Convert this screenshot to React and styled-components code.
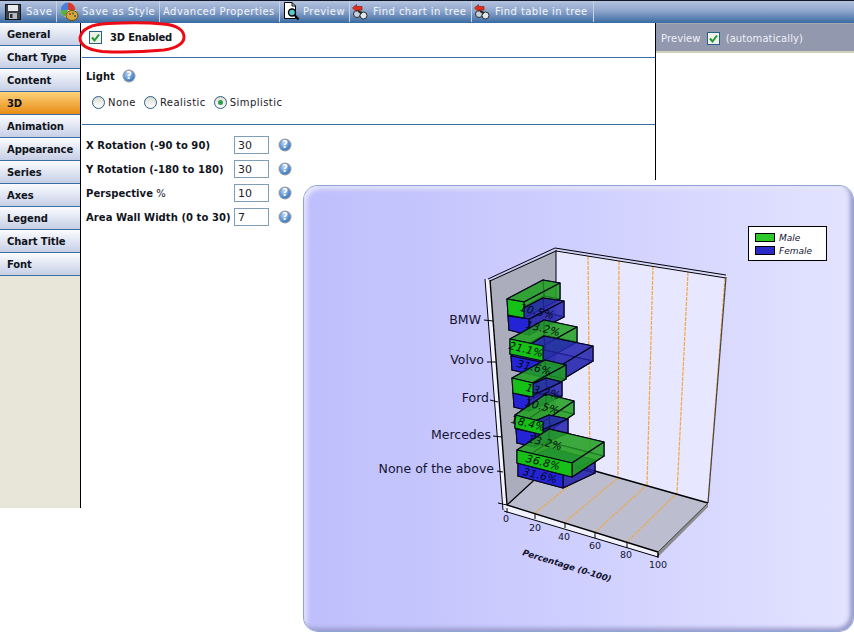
import React from 'react'
import styled, { createGlobalStyle } from 'styled-components'

const GlobalStyle = createGlobalStyle`
  html, body {
    margin: 0;
    padding: 0;
    background: #fff;
    font-family: "DejaVu Sans", Verdana, sans-serif;
    font-size: 10px;
  }
`

const Page = styled.div`
  position: relative;
  width: 854px;
  height: 636px;
  overflow: hidden;
`

const Toolbar = styled.div`
  display: flex;
  height: 22px;
  border-top: 1px solid #101828;
  background: linear-gradient(#b4c2de, #8ea6cc 45%, #3a6aa2);
`

const ToolButton = styled.div`
  display: flex;
  align-items: center;
  gap: ${p => p.$gap || 3}px;
  width: ${p => p.$width}px;
  box-sizing: border-box;
  padding-left: ${p => p.$left || 4}px;
  border-right: 1px solid #c6d2e6;
  margin-bottom: 1px;
  color: #f2f5fa;
  letter-spacing: 0.45px;
  white-space: nowrap;
`

const Body = styled.div`
  display: flex;
  height: 485px;
`

const Sidebar = styled.div`
  display: flex;
  flex-direction: column;
  flex: 0 0 80px;
  background: #e8e6d8;
  border-right: 1px solid #000;
`

const SideItem = styled.div`
  display: flex;
  align-items: center;
  height: 22px;
  padding-left: 7px;
  border-bottom: 1px solid #3a6ea5;
  font-weight: 700;
  color: #10141c;
  letter-spacing: -0.1px;
  background: ${p => p.$active
    ? 'linear-gradient(#fcd27a, #e88c14)'
    : 'linear-gradient(#fbfcfe, #c6cfe6)'};
`

const Main = styled.div`
  flex: 0 0 574px;
  display: flex;
  flex-direction: column;
`

const Section = styled.div`
  position: relative;
  display: flex;
  flex-direction: column;
  margin-left: 1px;
  border-bottom: 1px solid #3a6ea5;
`

const EnableRow = styled.label`
  display: flex;
  align-items: center;
  gap: 8px;
  height: 28px;
  padding: 0 0 6px 7px;
  font-weight: 700;
  color: #10141c;
  letter-spacing: -0.2px;
`

const Highlight = styled.svg`
  position: absolute;
  left: -4px;
  top: -3px;
`

const LightBlock = styled.div`
  display: flex;
  flex-direction: column;
  height: 66px;
  padding: 10px 0 0 4px;
  box-sizing: border-box;
`

const LightHead = styled.div`
  display: flex;
  align-items: center;
  gap: 7px;
  height: 16px;
  font-weight: 700;
  color: #10141c;
`

const Radios = styled.div`
  display: flex;
  align-items: center;
  gap: 8px;
  margin: 12px 0 0 6px;
`

const RadioItem = styled.span`
  display: flex;
  align-items: center;
  gap: 3px;
  color: #1c2028;
  letter-spacing: 0.45px;
`

const RadioDot = styled.span`
  display: flex;
  align-items: center;
  justify-content: center;
  width: 13px;
  height: 13px;
  box-sizing: border-box;
  border-radius: 50%;
  border: 1px solid #2d5f86;
  background: linear-gradient(#dcdcd4, #fff);

  &::after {
    content: "";
    display: ${p => p.$on ? 'block' : 'none'};
    width: 5px;
    height: 5px;
    border-radius: 50%;
    background: #2f9e4a;
  }
`

const Form = styled.div`
  display: grid;
  grid-template-columns: 148px 35px 23px;
  grid-auto-rows: 18px;
  row-gap: 6px;
  padding: 11px 0 0 5px;
  align-items: center;
`

const FieldLabel = styled.div`
  font-weight: 700;
  color: #10141c;
  white-space: nowrap;
  letter-spacing: 0.06px;

  span {
    font-weight: 400;
  }
`

const FieldInput = styled.div`
  box-sizing: border-box;
  height: 18px;
  padding-left: 3px;
  line-height: 17px;
  font-size: 11px;
  color: #1c2028;
  background: #fff;
  border: 1px solid #7f9db9;
`

const HelpSlot = styled.div`
  display: flex;
  margin-left: 9px;
`

const PreviewColumn = styled.div`
  flex: 1;
  align-self: flex-start;
  height: 157px;
  border-left: 1px solid #000;
`

const PreviewBar = styled.div`
  display: flex;
  align-items: center;
  gap: 6px;
  height: 30px;
  box-sizing: border-box;
  padding: 1px 0 0 5px;
  background: #9298ae;
  border-top: 1px solid #a5a8b4;
  border-bottom: 2px solid #d2d0bc;
  color: #eef0f8;
  letter-spacing: 0.1px;
`

const ChartWindow = styled.div`
  position: absolute;
  left: 304px;
  top: 186px;
  width: 549px;
  height: 445px;
  border-radius: 14px;
  background: linear-gradient(90deg, #bebefc, #cfcfff 50%, #e3e3ff);
  box-shadow: 0 0 0 1px #8ea4d4, inset -3px -3px 4px #9a9ccc, inset 3px 3px 4px #e6e6fc;
`

const ChartSvg = styled.svg`
  display: block;
  width: 100%;
  height: 100%;
`

const Help = () => (
  <svg width="14" height="14" viewBox="0 0 14 14">
    <defs>
      <radialGradient id="hb" cx="40%" cy="35%" r="70%">
        <stop offset="0" stopColor="#b6d4f6" />
        <stop offset="1" stopColor="#2f72c4" />
      </radialGradient>
    </defs>
    <circle cx="7" cy="7" r="6.5" fill="#9a9ea6" />
    <circle cx="7" cy="7" r="5.3" fill="url(#hb)" />
    <text x="7" y="10.4" textAnchor="middle" fontSize="10" fontWeight="700" fill="#fff" fontFamily="DejaVu Sans">?</text>
  </svg>
)

const Check = ({ size = 13 }) => (
  <svg width={size} height={size} viewBox="0 0 13 13">
    <rect x="0.5" y="0.5" width="12" height="12" fill="#eef0ea" stroke="#2d5f86" />
    <path d="M3 6.5 L5.5 9.5 L10 3.5" fill="none" stroke="#1f9a2e" strokeWidth="2" />
  </svg>
)

const Floppy = () => (
  <svg width="16" height="16" viewBox="0 0 16 16">
    <rect x="0.5" y="0.5" width="15" height="15" fill="#3a4048" stroke="#11151a" />
    <rect x="3" y="1" width="10" height="6" fill="#e8eaee" />
    <rect x="4" y="9" width="8" height="6" fill="#b4bac2" />
    <rect x="5" y="10" width="2.5" height="4" fill="#2a3038" />
  </svg>
)

const Palette = () => (
  <svg width="20" height="20" viewBox="0 0 20 20">
    <circle cx="9" cy="8" r="7.5" fill="#e8e4dc" />
    <path d="M9 .5 A7.5 7.5 0 0 1 16.5 8 L9 8 Z" fill="#d83a2c" />
    <path d="M1.5 8 A7.5 7.5 0 0 1 9 .5 L9 8 Z" fill="#4a7ed8" />
    <path d="M1.5 8 A7.5 7.5 0 0 0 6 14.8 L9 8 Z" fill="#58b04a" />
    <ellipse cx="13" cy="13.5" rx="6" ry="5" fill="#d8a838" stroke="#6a4c10" />
    <circle cx="11" cy="12" r="1" fill="#c83020" />
    <circle cx="14" cy="11.5" r="1" fill="#2a7a38" />
    <circle cx="16" cy="14" r="1" fill="#2850a8" />
  </svg>
)

const PreviewIcon = () => (
  <svg width="17" height="19" viewBox="0 0 17 19">
    <path d="M1.5 .5 H9 L12.5 4 V16.5 H1.5 Z" fill="#fff" stroke="#000" />
    <path d="M9 .5 V4 H12.5" fill="none" stroke="#000" />
    <circle cx="9" cy="10.5" r="3.5" fill="#58c8d0" stroke="#000" strokeWidth="1.4" />
    <path d="M11.5 13 L15.5 17.5" stroke="#000" strokeWidth="2.2" />
  </svg>
)

const FindIcon = () => (
  <svg width="16" height="16" viewBox="0 0 16 16">
    <circle cx="5" cy="10" r="3.5" fill="#c6d2dc" stroke="#2c2c2c" />
    <circle cx="11.5" cy="11.5" r="3.5" fill="#dfe6ec" stroke="#2c2c2c" />
    <path d="M6 7 L10 9" stroke="#2c2c2c" strokeWidth="2" />
    <path d="M0.5 4 L4.5 0.5 V2.5 H10 V6 H4.5 V7.5 Z" fill="#e0301c" stroke="#8a1408" strokeWidth="0.6" />
  </svg>
)

const plus = (p, v) => [p[0] + v[0], p[1] + v[1]]
const pts = list => list.map(p => p.join(',')).join(' ')

const BAR_COLORS = {
  green: { front: '#16c016', side: '#26a426', inner: '#128a12' },
  blue: { front: '#2424d6', side: '#2a2ab4', inner: '#16169a' }
}

const barLine = { stroke: '#06061c', strokeWidth: 1.1, strokeLinejoin: 'round' }

// corners of the front face in page pixels, then the depth vector
const groups = [
  {
    green: { color: 'green', tl: [507, 299], tr: [524, 302], br: [524, 318], bl: [508, 315], depth: [36, -19], label: '10.5%', at: [537, 312] },
    blue: { color: 'blue', tl: [508, 316], tr: [529, 319], br: [529, 335], bl: [509, 330], depth: [35, -18], label: '13.2%', at: [543, 329] }
  },
  {
    green: { color: 'green', tl: [510, 339], tr: [543, 346], br: [543, 361], bl: [510, 354], depth: [34, -19], label: '21.1%', at: [526, 350] },
    blue: { color: 'blue', tl: [511, 356], tr: [560, 366], br: [560, 381], bl: [512, 370], depth: [33, -20], label: '31.6%', at: [534, 368] }
  },
  {
    green: { color: 'green', tl: [512, 378], tr: [533, 383], br: [533, 397], bl: [513, 393], depth: [33, -18], label: '13.2%', at: [543, 392] },
    blue: { color: 'blue', tl: [513, 393], tr: [529, 397], br: [529, 411], bl: [514, 407], depth: [33, -15], label: '10.5%', at: [542, 407] }
  },
  {
    green: { color: 'green', tl: [515, 415], tr: [543, 422], br: [543, 435], bl: [515, 428], depth: [31, -21], label: '18.4%', at: [528, 424] },
    blue: { color: 'blue', tl: [516, 429], tr: [535, 433], br: [535, 447], bl: [517, 443], depth: [33, -14], label: '13.2%', at: [545, 443] }
  },
  {
    blueFirst: true,
    green: { color: 'green', tl: [517, 450], tr: [572, 463], br: [572, 477], bl: [517, 463], depth: [32, -21], label: '36.8%', at: [543, 463] },
    blue: { color: 'blue', tl: [518, 463], tr: [563, 475], br: [563, 488], bl: [518, 476], depth: [32, -15], label: '31.6%', at: [540, 476] }
  }
]

const BarBody = ({ color, tl, tr, br, bl, depth }) => {
  const c = BAR_COLORS[color]
  const back = [tl, tr, br, bl].map(p => plus(p, depth))
  return (
    <g>
      <polygon points={pts([bl, br, back[2], back[3]])} fill={c.inner} fillOpacity="0.6" {...barLine} />
      <polygon points={pts(back)} fill={c.inner} fillOpacity="0.5" {...barLine} />
      <polygon points={pts([tl, bl, back[3], back[0]])} fill={c.inner} fillOpacity="0.5" {...barLine} />
      <polygon points={pts([tl, tr, back[1], back[0]])} fill={c.side} fillOpacity="0.75" {...barLine} />
      <polygon points={pts([tr, br, back[2], back[1]])} fill={c.side} fillOpacity="0.75" {...barLine} />
    </g>
  )
}

const BarFront = ({ color, tl, tr, br, bl }) => (
  <polygon points={pts([tl, tr, br, bl])} fill={BAR_COLORS[color].front} {...barLine} />
)

// the green front stays clear of the blue bar, its sides do not
const BarGroup = ({ green, blue, blueFirst }) => (
  <g>
    {blueFirst && <BarBody {...blue} />}
    {blueFirst && <BarFront {...blue} />}
    <BarBody {...green} />
    {!blueFirst && <BarBody {...blue} />}
    {!blueFirst && <BarFront {...blue} />}
    <BarFront {...green} />
  </g>
)

const BarLabel = ({ label, at }) => (
  <text
    x={at[0]}
    y={at[1] + 3}
    textAnchor="middle"
    fontSize="10.5"
    fontStyle="italic"
    fill="#020a14"
    letterSpacing="0.3"
    transform={`rotate(14 ${at[0]} ${at[1]})`}
  >
    {label}
  </text>
)

const wallGrid = [
  [588, 256, 590, 469],
  [619, 261, 618, 478],
  [653, 266, 647, 485],
  [688, 272, 677, 493],
  [725, 278, 708, 503]
]

const floorGrid = [
  [590, 469, 535, 513],
  [618, 478, 565, 522],
  [647, 485, 595, 532],
  [677, 493, 627, 542]
]

const categories = [
  { name: 'BMW', x: 481, y: 320, tick: [484, 320, 493, 321] },
  { name: 'Volvo', x: 484, y: 360, tick: [487, 362, 496, 362] },
  { name: 'Ford', x: 489, y: 398, tick: [490, 400, 498, 402] },
  { name: 'Mercedes', x: 491, y: 435, tick: [493, 436, 502, 437] },
  { name: 'None of the above', x: 494, y: 469, tick: [497, 471, 503, 472] }
]

const valueTicks = [
  { label: '0', x: 507, y: 508, ty: 522, tx: 506 },
  { label: '20', x: 535, y: 514, ty: 531, tx: 535 },
  { label: '40', x: 565, y: 523, ty: 540, tx: 564 },
  { label: '60', x: 595, y: 533, ty: 549, tx: 595 },
  { label: '80', x: 627, y: 543, ty: 558, tx: 626 },
  { label: '100', x: 658, y: 553, ty: 568, tx: 658 }
]

const Chart = () => (
  <ChartSvg viewBox="304 186 549 445" fontFamily="DejaVu Sans, Verdana, sans-serif">
    {/* back wall, side wall and floor */}
    <polygon points="556,250 726,277 708,503 556,460" fill="#e7e7ff" />
    <polygon points="490,280 556,250 556,460 507,505" fill="#abacbc" />
    <polygon points="507,505 556,460 708,503 658,552" fill="#bdbdd0" />
    <polygon points="485,279 490,280 507,505 503,510" fill="#f2f2ff" />
    <polygon points="507,505 658,552 658,557 504,511" fill="#f2f2ff" />
    <polygon points="658,552 708,503 708,507 658,557" fill="#8c8c90" />

    {wallGrid.map(([a, b, c, d], i) => (
      <line key={i} x1={a} y1={b} x2={c} y2={d} stroke="#f4a640" strokeWidth="1.2" strokeDasharray="4 1" />
    ))}
    {floorGrid.map(([a, b, c, d], i) => (
      <line key={i} x1={a} y1={b} x2={c} y2={d} stroke="#f0a83c" strokeWidth="1.1" strokeDasharray="3 1" />
    ))}

    <g fill="none" stroke="#000">
      <path d="M485 279 L503 510" strokeWidth="1" />
      <path d="M490 280 L507 505" strokeWidth="1.4" />
      <path d="M488 279 L555 248" strokeWidth="1" />
      <path d="M490 281 L556 251" strokeWidth="1" />
      <path d="M555 248 L726 275" strokeWidth="1" />
      <path d="M556 251 L726 278" strokeWidth="1" />
      <path d="M556 250 L556 300" strokeWidth="1" />
      <path d="M726 277 L708 503" strokeWidth="1.2" stroke="#444" />
      <path d="M507 505 L556 460" strokeWidth="1.2" />
      <path d="M556 460 L708 503" strokeWidth="1.4" />
      <path d="M507 505 L658 552" strokeWidth="1.4" />
      <path d="M504 511 L658 557" strokeWidth="1" />
      <path d="M658 552 L708 503" strokeWidth="1" stroke="#444" />
      <path d="M658 552 V557" strokeWidth="1" />
      <path d="M498 503 L507 505" strokeWidth="1" />
    </g>

    {groups.map((group, i) => <BarGroup key={i} {...group} />)}
    {groups.map((group, i) => (
      <g key={i}>
        <BarLabel label={group.green.label} at={group.green.at} />
        <BarLabel label={group.blue.label} at={group.blue.at} />
      </g>
    ))}

    {categories.map(({ name, x, y, tick }) => (
      <g key={name}>
        <text x={x} y={y + 4} textAnchor="end" fontSize="12.5" fill="#141432">{name}</text>
        <line x1={tick[0]} y1={tick[1]} x2={tick[2]} y2={tick[3]} stroke="#000" />
      </g>
    ))}

    {valueTicks.map(({ label, x, y, tx, ty }) => (
      <g key={label}>
        <line x1={x} y1={y} x2={x} y2={y + 5} stroke="#000" />
        <text x={tx} y={ty} textAnchor="middle" fontSize="9.5" fill="#141432">{label}</text>
      </g>
    ))}

    <text
      x="522"
      y="555"
      fontSize="8.5"
      fontWeight="700"
      fontStyle="italic"
      fill="#10102a"
      transform="rotate(17 522 555)"
    >
      Percentage (0-100)
    </text>

    {/* legend */}
    <rect x="748.5" y="226.5" width="78" height="34" fill="#fff" stroke="#000" />
    <rect x="755.5" y="233.5" width="19" height="8" fill="#2cc82c" stroke="#000" />
    <rect x="755.5" y="246.5" width="19" height="8" fill="#2a2ac8" stroke="#000" />
    <text x="779" y="241" fontSize="9" fontStyle="italic" fill="#141432">Male</text>
    <text x="779" y="254" fontSize="9" fontStyle="italic" fill="#141432">Female</text>
  </ChartSvg>
)

const sideItems = ['General', 'Chart Type', 'Content', '3D', 'Animation', 'Appearance', 'Series', 'Axes', 'Legend', 'Chart Title', 'Font']

const fields = [
  { label: 'X Rotation (-90 to 90)', value: '30' },
  { label: 'Y Rotation (-180 to 180)', value: '30' },
  { label: 'Perspective', unit: '%', value: '10' },
  { label: 'Area Wall Width (0 to 30)', value: '7' }
]

export default function App () {
  return (
    <Page>
      <GlobalStyle />
      <Toolbar>
        <ToolButton $width={57} $left={5} $gap={5}><Floppy />Save</ToolButton>
        <ToolButton $width={103} $left={2} $gap={0}><Palette />Save as Style</ToolButton>
        <ToolButton $width={120} $left={3}>Advanced Properties</ToolButton>
        <ToolButton $width={70} $left={3} $gap={3}><PreviewIcon />Preview</ToolButton>
        <ToolButton $width={122} $left={2} $gap={5}><FindIcon />Find chart in tree</ToolButton>
        <ToolButton $width={122} $left={2} $gap={5}><FindIcon />Find table in tree</ToolButton>
      </Toolbar>
      <Body>
        <Sidebar>
          {sideItems.map(name => (
            <SideItem key={name} $active={name === '3D'}>{name}</SideItem>
          ))}
        </Sidebar>
        <Main>
          <Section>
            <EnableRow><Check />3D Enabled</EnableRow>
            <Highlight width="110" height="36" viewBox="0 0 110 36">
              <path
                d="M2 18 C3 9 14 4 30 3.5 C50 2.5 70 2.5 85 4 C100 5 106 11 106 17 C106 24 98 28 86 30 C65 32 40 32.5 24 31.5 C12 30 2 26 2 18 Z"
                fill="none"
                stroke="#ee0a14"
                strokeWidth="3"
              />
            </Highlight>
          </Section>
          <Section>
            <LightBlock>
              <LightHead>Light <Help /></LightHead>
              <Radios>
                <RadioItem><RadioDot />None</RadioItem>
                <RadioItem><RadioDot />Realistic</RadioItem>
                <RadioItem><RadioDot $on />Simplistic</RadioItem>
              </Radios>
            </LightBlock>
          </Section>
          <Form>
            {fields.map(({ label, unit, value }) => (
              <React.Fragment key={label}>
                <FieldLabel>{label}{unit && <span> {unit}</span>}</FieldLabel>
                <FieldInput>{value}</FieldInput>
                <HelpSlot><Help /></HelpSlot>
              </React.Fragment>
            ))}
          </Form>
        </Main>
        <PreviewColumn>
          <PreviewBar>Preview <Check /> (automatically)</PreviewBar>
        </PreviewColumn>
      </Body>
      <ChartWindow><Chart /></ChartWindow>
    </Page>
  )
}
